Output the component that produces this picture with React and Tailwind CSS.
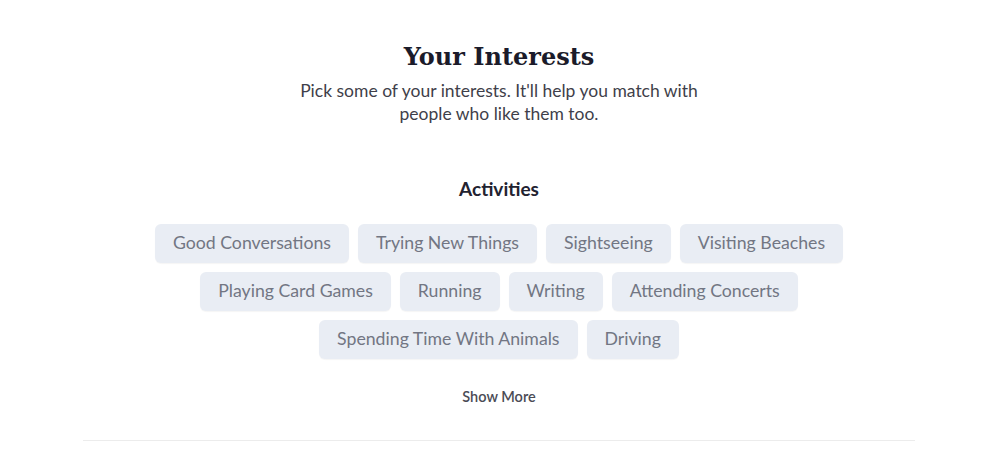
import React from "react";

const rows = [
  "Good Conversations",
  "Trying New Things",
  "Sightseeing",
  "Visiting Beaches",
  "Playing Card Games",
  "Running",
  "Writing",
  "Attending Concerts",
  "Spending Time With Animals",
  "Driving",
];

export default function App() {
  return (
    <div className="w-[998px] h-[465px] bg-white overflow-hidden" style={{ fontFamily: "Lato, 'Noto Sans', sans-serif" }}>
      <div className="flex flex-col items-center pt-[39px]">
        <h1 className="text-[24px] leading-[36px] font-bold text-[#1b1b2a]" style={{ fontFamily: "'DejaVu Serif', 'Liberation Serif', serif" }}>
          Your Interests
        </h1>
        <p className="mt-[4px] max-w-[420px] text-center text-[17.5px] leading-[23px] text-[#3f3f4a]">
          Pick some of your interests. It'll help you match with people who like them too.
        </p>
        <h2 className="mt-[52px] text-[19px] leading-[24px] font-bold text-[#222230]">Activities</h2>
        <div className="mt-[23px] w-[710px] flex flex-wrap justify-center gap-[9px]">
          {rows.map((r) => (
            <button
              key={r}
              className="h-[39px] px-[18px] rounded-[6px] bg-[#e9edf4] text-[17.7px] text-[#727683] shadow-[0_1px_1px_rgba(0,0,0,0.04)]"
            >
              {r}
            </button>
          ))}
        </div>
        <button className="mt-[27px] text-[14.5px] font-semibold text-[#4b4b55]">Show More</button>
        <div className="mt-[32px] w-[832px] h-px bg-[#ececec]" />
      </div>
    </div>
  );
}
